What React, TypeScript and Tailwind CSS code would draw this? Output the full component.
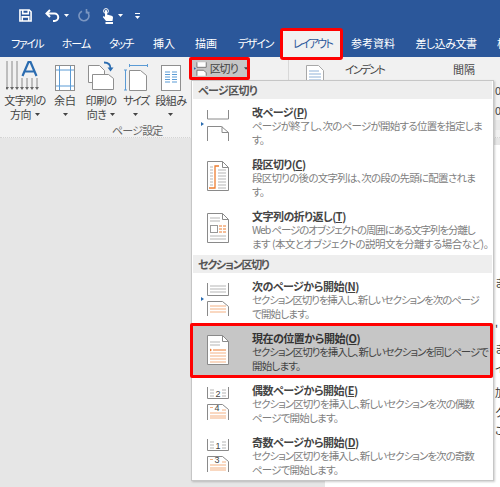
const jp = "font-['Noto_Sans_CJK_JP','Noto_Sans',sans-serif] [font-feature-settings:'palt']";

const Caret = ({ className = "" }: { className?: string }) => (
  <svg width="5" height="3" viewBox="0 0 5 3" className={className}>
    <path d="M0 0h5L2.5 3z" fill="currentColor" />
  </svg>
);

// quick access bar
const SaveIcon = () => (
  <svg width="13" height="13" viewBox="0 0 14 14" fill="none" stroke="white" strokeWidth="1.7">
    <path d="M1 1h10l2 2v10H1z" />
    <path d="M4 1v4h6V1M3.5 13V8.5h7V13" />
  </svg>
);
const UndoIcon = () => (
  <svg width="15" height="13" viewBox="0 0 15 13" fill="none" stroke="white" strokeWidth="2">
    <path d="M5 1 1.5 4.5 5 8" />
    <path d="M2 4.5h7.5a3.6 3.6 0 0 1 0 7.5H8" />
  </svg>
);
const RedoIcon = () => (
  <svg width="12" height="13" viewBox="0 0 12 13" fill="none" stroke="#7b96c1" strokeWidth="1.6">
    <path d="M4 2.2a5 5 0 1 0 5 .6" />
    <path d="M8.5 0v3.6h3" />
  </svg>
);
const TouchIcon = () => (
  <svg width="12" height="16" viewBox="0 0 12 16" fill="none">
    <circle cx="4" cy="3" r="2.4" stroke="white" />
    <path d="M3 3a1 1 0 0 1 2 0v3.5l4.5 1.2c1 .3 1.6 1 1.5 2L10.5 13H4L.8 9l1-.9L3 9z" fill="white" />
    <rect x="3.5" y="14" width="7.5" height="2" fill="white" />
  </svg>
);

// ribbon icons
const TextDirIcon = () => (
  <svg width="38" height="30" viewBox="0 0 38 30" fill="none">
    {[1, 6, 11].map((x) => (
      <g key={x}>
        <path d={`M${x} 0v26`} stroke="#8a8a8a" />
        <path d={`M${x - 2} 26h4l-2 3z`} fill="#666" />
      </g>
    ))}
    {[16, 21, 26, 31].map((x) => (
      <g key={x}>
        <path d={`M${x} 17v9`} stroke="#8a8a8a" />
        <path d={`M${x - 2} 26h4l-2 3z`} fill="#666" />
      </g>
    ))}
    <path d="M16.5 15 22.5 1h2l6 14M18.8 10.5h9.4" stroke="#2b6cb0" strokeWidth="2.2" />
  </svg>
);
const MarginIcon = () => (
  <svg width="20" height="26" viewBox="0 0 20 26" fill="none">
    <rect x="0.5" y="0.5" width="19" height="25" fill="#fff" stroke="#8f8f8f" />
    <path d="M4.5 1v24M15.5 1v24M1 5h18M1 21h18" stroke="#5b9bd5" />
  </svg>
);
const OrientIcon = () => (
  <svg width="28" height="30" viewBox="0 0 28 30" fill="none">
    <path d="M1.5 4.5h11l5 5v12h-16z" fill="#fff" stroke="#8f8f8f" />
    <path d="M5.5 13.5h16l5 4v11h-21z" fill="#fff" stroke="#8f8f8f" />
    <path d="M17 1.5c4 0 6.5 1.5 6.5 6" stroke="#2b6cb0" strokeWidth="1.8" />
    <path d="M20.5 6.5h6L23.5 10.5z" fill="#2b6cb0" />
  </svg>
);
const SizeIcon = () => (
  <svg width="24" height="27" viewBox="0 0 24 27" fill="none">
    <path d="M5.5 1.5h18M5.5 0v3M23.5 0v3" stroke="#5b9bd5" />
    <path d="M1.5 6v20M0 6h3M0 26h3" stroke="#5b9bd5" />
    <path d="M5.5 6.5h11l6 5v15h-17z" fill="#fff" stroke="#8f8f8f" />
  </svg>
);
const ColumnsIcon = () => (
  <svg width="20" height="26" viewBox="0 0 20 26" fill="none">
    <rect x="0.5" y="0.5" width="19" height="25" fill="#fff" stroke="#8f8f8f" />
    {[7, 9.5, 12, 14.5, 17].map((y) => (
      <path key={y} d={`M4 ${y}h5M11 ${y}h5`} stroke="#5b9bd5" />
    ))}
  </svg>
);
const BreakSmallIcon = () => (
  <svg width="15" height="16" viewBox="0 0 15 16" fill="none">
    <path d="M3.5 0v6h11V0" fill="#fff" stroke="#666" />
    <path d="M3.5 16V9.5h8l3 3V16" fill="#fff" stroke="#666" />
    <path d="M0 6 2.5 7.5 0 9z" fill="#2b6cb0" />
  </svg>
);

// menu icons, all on one 32x34 box
const MIcon = ({ children }: { children: React.ReactNode }) => (
  <svg width="32" height="34" viewBox="0 0 32 34" fill="none">
    {children}
  </svg>
);
const FullPage = () => (
  <>
    <path d="M6.5 .5h15l6 6v23h-21z" fill="#fff" stroke="#8a8a8a" />
    <path d="M21.5 .5v6h6" stroke="#8a8a8a" />
  </>
);
const Tick = ({ y }: { y: number }) => <path d={`M0 ${y}l3 2-3 2z`} fill="#2b6cb0" />;
const GrayLines = ({ ys, x1 = 9, x2 = 25 }: { ys: number[]; x1?: number; x2?: number }) => (
  <>
    {ys.map((y) => (
      <path key={y} d={`M${x1} ${y}H${x2}`} stroke="#b5b5b5" />
    ))}
  </>
);
const OrangeLines = ({ ys, x1 = 9, x2 = 25 }: { ys: number[]; x1?: number; x2?: number }) => (
  <>
    {ys.map((y) => (
      <path key={y} d={`M${x1} ${y}H${x2}`} stroke="#f4b183" />
    ))}
  </>
);

const PageBreakIcon = () => (
  <MIcon>
    <path d="M6.5 1v9h21V1" stroke="#8a8a8a" />
    <path d="M6.5 32V17.5h14l7 6V32" stroke="#8a8a8a" />
    <path d="M21 17.5v6h6.5" stroke="#8a8a8a" />
    <Tick y={13} />
  </MIcon>
);
const ColumnBreakIcon = () => (
  <MIcon>
    <FullPage />
    <GrayLines ys={[6, 9, 12, 15, 18, 21, 24]} x1={9} x2={12} />
    <GrayLines ys={[9, 12, 15, 18, 21, 24, 27]} x1={17} x2={25} />
    <path d="M18 5H14V27H8" stroke="#ed7d31" strokeWidth="1.3" />
  </MIcon>
);
const WrapIcon = () => (
  <MIcon>
    <FullPage />
    <GrayLines ys={[5, 8]} x2={19} />
    <GrayLines ys={[23, 26]} />
    <rect x="9.5" y="12.5" width="7" height="7" fill="#fff" stroke="#999" />
    <path d="M18 13h7M18 16h7M18 19h7" stroke="#ed7d31" strokeDasharray="3 1" />
  </MIcon>
);
const NextPageIcon = () => (
  <MIcon>
    <path d="M6.5 0v12.5h21V0" stroke="#8a8a8a" />
    <GrayLines ys={[3, 6, 9]} />
    <Tick y={14} />
    <path d="M6.5 33V18.5h15l6 5V33" fill="#fff" stroke="#8a8a8a" />
    <OrangeLines ys={[23, 26, 29]} />
  </MIcon>
);
const CurrentIcon = () => (
  <MIcon>
    <FullPage />
    <GrayLines ys={[7, 10]} x2={19} />
    <path d="M9 13.5l2 1.5-2 1.5z" fill="#ed7d31" />
    <path d="M12 15H25" stroke="#ed7d31" />
    <OrangeLines ys={[18, 21, 24, 27]} />
  </MIcon>
);
const NumberedIcon = ({ top, bottom }: { top: string; bottom: string }) => (
  <MIcon>
    <path d="M6.5 0v11.5h21V0" stroke="#8a8a8a" />
    <GrayLines ys={[3, 6, 9]} x1={9} x2={13} />
    <GrayLines ys={[3, 6, 9]} x1={21} x2={25} />
    <text x="17" y="9.5" textAnchor="middle" fontSize="9" fill="#444" fontFamily="'Liberation Sans',sans-serif">
      {top}
    </text>
    <path d="M6.5 33V17.5h15l6 5V33" fill="#fff" stroke="#8a8a8a" />
    <path d="M9 20.5h3M21 23h4" stroke="#f4b183" />
    <OrangeLines ys={[26, 29, 31]} />
    <text x="16" y="24" textAnchor="middle" fontSize="9" fill="#444" fontFamily="'Liberation Sans',sans-serif">
      {bottom}
    </text>
  </MIcon>
);

const tabs = [
  { label: "ファイル", w: "w-[54px]", track: "tracking-[-1.5px]" },
  { label: "ホーム", w: "w-[44px]", track: "tracking-[-1px]" },
  { label: "タッチ", w: "w-[46px]", track: "tracking-[-1.5px]" },
  { label: "挿入", w: "w-[40px]", track: "tracking-[0px]" },
  { label: "描画", w: "w-[44px]", track: "tracking-[0px]" },
  { label: "デザイン", w: "w-[55px]", track: "tracking-[-1.2px]" },
  { label: "レイアウト", w: "w-[59px]", track: "tracking-[-1.8px]", active: true },
  { label: "参考資料", w: "w-[62px]", track: "tracking-[0px]" },
  { label: "差し込み文書", w: "w-[84px]", track: "tracking-[-0.5px]" },
  { label: "校閲", w: "w-[40px]", track: "tracking-[0px]" },
];

const bigButtons = [
  { icon: <TextDirIcon />, lines: ["文字列の", "方向"], w: "w-[48px]", inlineCaret: true, track: "tracking-[-0.5px]" },
  { icon: <MarginIcon />, lines: ["余白"], w: "w-[32px]", track: "tracking-[0px]" },
  { icon: <OrientIcon />, lines: ["印刷の", "向き"], w: "w-[40px]", inlineCaret: true, track: "tracking-[-0.5px]" },
  { icon: <SizeIcon />, lines: ["サイズ"], w: "w-[30px]", track: "tracking-[-1.5px]" },
  { icon: <ColumnsIcon />, lines: ["段組み"], w: "w-[40px]", track: "tracking-[-0.5px]" },
];

const RibbonButton = ({ icon, lines, w, inlineCaret, track }: (typeof bigButtons)[number]) => (
  <div className={`${w} shrink-0 flex flex-col items-center`}>
    <div className="h-[32px] flex items-end justify-center">{icon}</div>
    <div className={`mt-[2px] text-center whitespace-nowrap ${track}`}>
      {lines.map((line, i) => (
        <div key={line} className="h-[14px] leading-[14px] flex items-center justify-center gap-[4px]">
          {line}
          {inlineCaret && i === 1 && <Caret />}
        </div>
      ))}
      {!inlineCaret && (
        <div className="h-[14px] flex items-center justify-center">
          <Caret />
        </div>
      )}
    </div>
  </div>
);

const pageItems = [
  { icon: <PageBreakIcon />, title: "改ページ", hot: "P", track: "tracking-[-0.75px]", lines: ["ページが終了し、次のページが開始する位置を指定しま", "す。"] },
  { icon: <ColumnBreakIcon />, title: "段区切り", hot: "C", track: "tracking-[-0.75px]", lines: ["段区切りの後の文字列は、次の段の先頭に配置されま", "す。"] },
  { icon: <WrapIcon />, title: "文字列の折り返し", hot: "T", track: "tracking-[-1.1px]", lastTrack: "tracking-[-0.55px]", lines: ["Web ページのオブジェクトの周囲にある文字列を分離し", "ます (本文とオブジェクトの説明文を分離する場合など)。"] },
];
const sectionItems = [
  { icon: <NextPageIcon />, title: "次のページから開始", hot: "N", track: "tracking-[-1.15px]", lines: ["セクション区切りを挿入し、新しいセクションを次のページ", "で開始します。"] },
  { icon: <CurrentIcon />, title: "現在の位置から開始", hot: "O", track: "tracking-[-1.1px]", lines: ["セクション区切りを挿入し、新しいセクションを同じページで", "開始します。"], selected: true },
  { icon: <NumberedIcon top="2" bottom="4" />, title: "偶数ページから開始", hot: "E", track: "tracking-[-1px]", lines: ["セクション区切りを挿入し、新しいセクションを次の偶数", "ページで開始します。"] },
  { icon: <NumberedIcon top="1" bottom="3" />, title: "奇数ページから開始", hot: "D", track: "tracking-[-1px]", lines: ["セクション区切りを挿入し、新しいセクションを次の奇数", "ページで開始します。"] },
];

const MenuItem = ({ icon, title, hot, lines, track, lastTrack = "tracking-[-0.8px]", selected }: {
  icon: React.ReactNode;
  title: string;
  hot: string;
  lines: string[];
  track: string;
  lastTrack?: string;
  selected?: boolean;
}) => (
  <div className={`relative h-[52px] flex ${selected ? "bg-[#c6c6c6]" : ""}`}>
    <div className="w-[60px] pl-[9px] pt-[10px] shrink-0">{icon}</div>
    <div className="pt-[6px] whitespace-nowrap text-[10.5px] leading-[14px]">
      <div className={`text-[11px] tracking-[-0.5px] font-bold ${selected ? "text-[#333]" : "text-[#444]"}`}>
        {title}(<span className="underline">{hot}</span>)
      </div>
      {lines.map((line, i) => (
        <div key={line} className={`${i === 0 ? track : lastTrack} ${selected ? "text-[#444]" : "text-[#808080]"}`}>
          {line}
        </div>
      ))}
    </div>
    {selected && (
      <div className="absolute -top-[2px] -bottom-[1px] -left-[2px] right-0 border-[3px] border-[#f00] rounded-[2px]" />
    )}
  </div>
);

const MenuHeader = ({ label, track }: { label: string; track: string }) => (
  <div className={`h-[18px] flex items-center px-[5px] mx-[1px] bg-[#eeeeee] text-[11px] font-bold text-[#555] ${track}`}>{label}</div>
);

export default function App() {
  return (
    <div className={`${jp} relative w-[500px] h-[487px] overflow-hidden bg-white`}>
      {/* title bar + tabs */}
      <div className="h-[57px] bg-[#2b579a] flex flex-col text-white">
        <div className="h-[30px] flex items-center pl-[19px] pt-[1px]">
          <SaveIcon />
          <div className="ml-[13px]">
            <UndoIcon />
          </div>
          <Caret className="ml-[4px]" />
          <div className="ml-[9px]">
            <RedoIcon />
          </div>
          <div className="ml-[12px]">
            <TouchIcon />
          </div>
          <Caret className="ml-[4px]" />
          <div className="ml-[12px] flex flex-col items-center gap-[2px]">
            <div className="w-[5px] h-px bg-white" />
            <Caret />
          </div>
        </div>
        <div className="flex h-[27px] text-[11px] whitespace-nowrap">
          {tabs.map((t) => (
            <div
              key={t.label}
              className={`${t.w} ${t.track} shrink-0 relative flex items-center justify-center ${t.active ? "bg-[#f1f1f1] text-[#2b579a]" : ""}`}
            >
              {t.label}
              {t.active && (
                <div className="absolute -top-[2px] -bottom-[3px] -left-[3px] -right-[1px] border-[3px] border-[#f00] rounded-[3px]" />
              )}
            </div>
          ))}
        </div>
      </div>

      {/* ribbon */}
      <div className="h-[81px] bg-[#f1f1f1] flex text-[11px] text-[#444] border-b border-dotted border-[#d4d4d4]">
        <div className="w-[189px] shrink-0 flex flex-col pt-[2px] pl-[1px]">
          <div className="flex">
            {bigButtons.map((b) => (
              <RibbonButton key={b.lines[0]} {...b} />
            ))}
          </div>
          <div className="mt-auto pl-[111px] text-[#666] whitespace-nowrap leading-[14px] tracking-[-0.8px]">ページ設定</div>
        </div>
        <div className="w-[100px] shrink-0 pt-[2px] border-r border-[#d8d8d8]">
          <div className="relative w-[57px] h-[19px] ml-[2px] bg-[#c6c6c6] flex items-center gap-[3px] pl-[3px] whitespace-nowrap tracking-[-1px]">
            <BreakSmallIcon />
            区切り
            <Caret className="ml-[3px]" />
            <div className="absolute -inset-[2px] border-[3px] border-[#f00] rounded-[2px]" />
          </div>
        </div>
        <div className="w-[56px] shrink-0 pl-[17px] pt-[8px]">
          <svg width="18" height="20" viewBox="0 0 18 20" fill="none">
            <path d="M.5 20V.5h12l5 5V20" fill="#fff" stroke="#a8a8a8" />
            <path d="M3 6h10M3 9h12M3 12h12M3 15h12M3 18h12" stroke="#8fb1d8" />
          </svg>
        </div>
        <div className="w-[108px] shrink-0 pt-[4px] whitespace-nowrap tracking-[-1.8px]">インデント</div>
        <div className="w-[42px] shrink-0 pt-[4px] whitespace-nowrap">間隔</div>
        <div className="flex-1 pt-[26px] leading-[14px]">
          <div>0</div>
          <div className="mt-[6px]">0</div>
          <div className="mt-[3px] h-[10px] bg-[#e9e9e9]" />
        </div>
      </div>

      {/* work area */}
      <div className="flex h-[349px]">
        <div className="w-[325px] bg-[#e6e6e6]" />
        <div className="flex-1 overflow-hidden text-[11px] leading-[14px] text-[#333] whitespace-nowrap">
          <div className="h-[7px] bg-[#e6e6e6]" />
          <div className="pl-[170px]">
            <div className="mt-[130px]">ま</div>
            <div className="mt-[32px]">'</div>
            <div className="mt-[6px]">ま</div>
            <div className="mt-[6px]">イ</div>
            <div className="mt-[10px]">加</div>
            <div className="mt-[6px]">ク</div>
            <div className="mt-[4px]">こ</div>
          </div>
        </div>
      </div>

      {/* 区切り dropdown */}
      <div className="absolute left-[191px] top-[80px] w-[303px] h-[401px] bg-white border border-[#c6c6c6] shadow-[1px_1px_2px_rgba(0,0,0,0.2)]">
        <MenuHeader label="ページ区切り" track="tracking-[-0.6px]" />
        {pageItems.map((it) => (
          <MenuItem key={it.title} {...it} />
        ))}
        <MenuHeader label="セクション区切り" track="tracking-[-1.2px]" />
        {sectionItems.map((it) => (
          <MenuItem key={it.title} {...it} />
        ))}
      </div>
    </div>
  );
}
